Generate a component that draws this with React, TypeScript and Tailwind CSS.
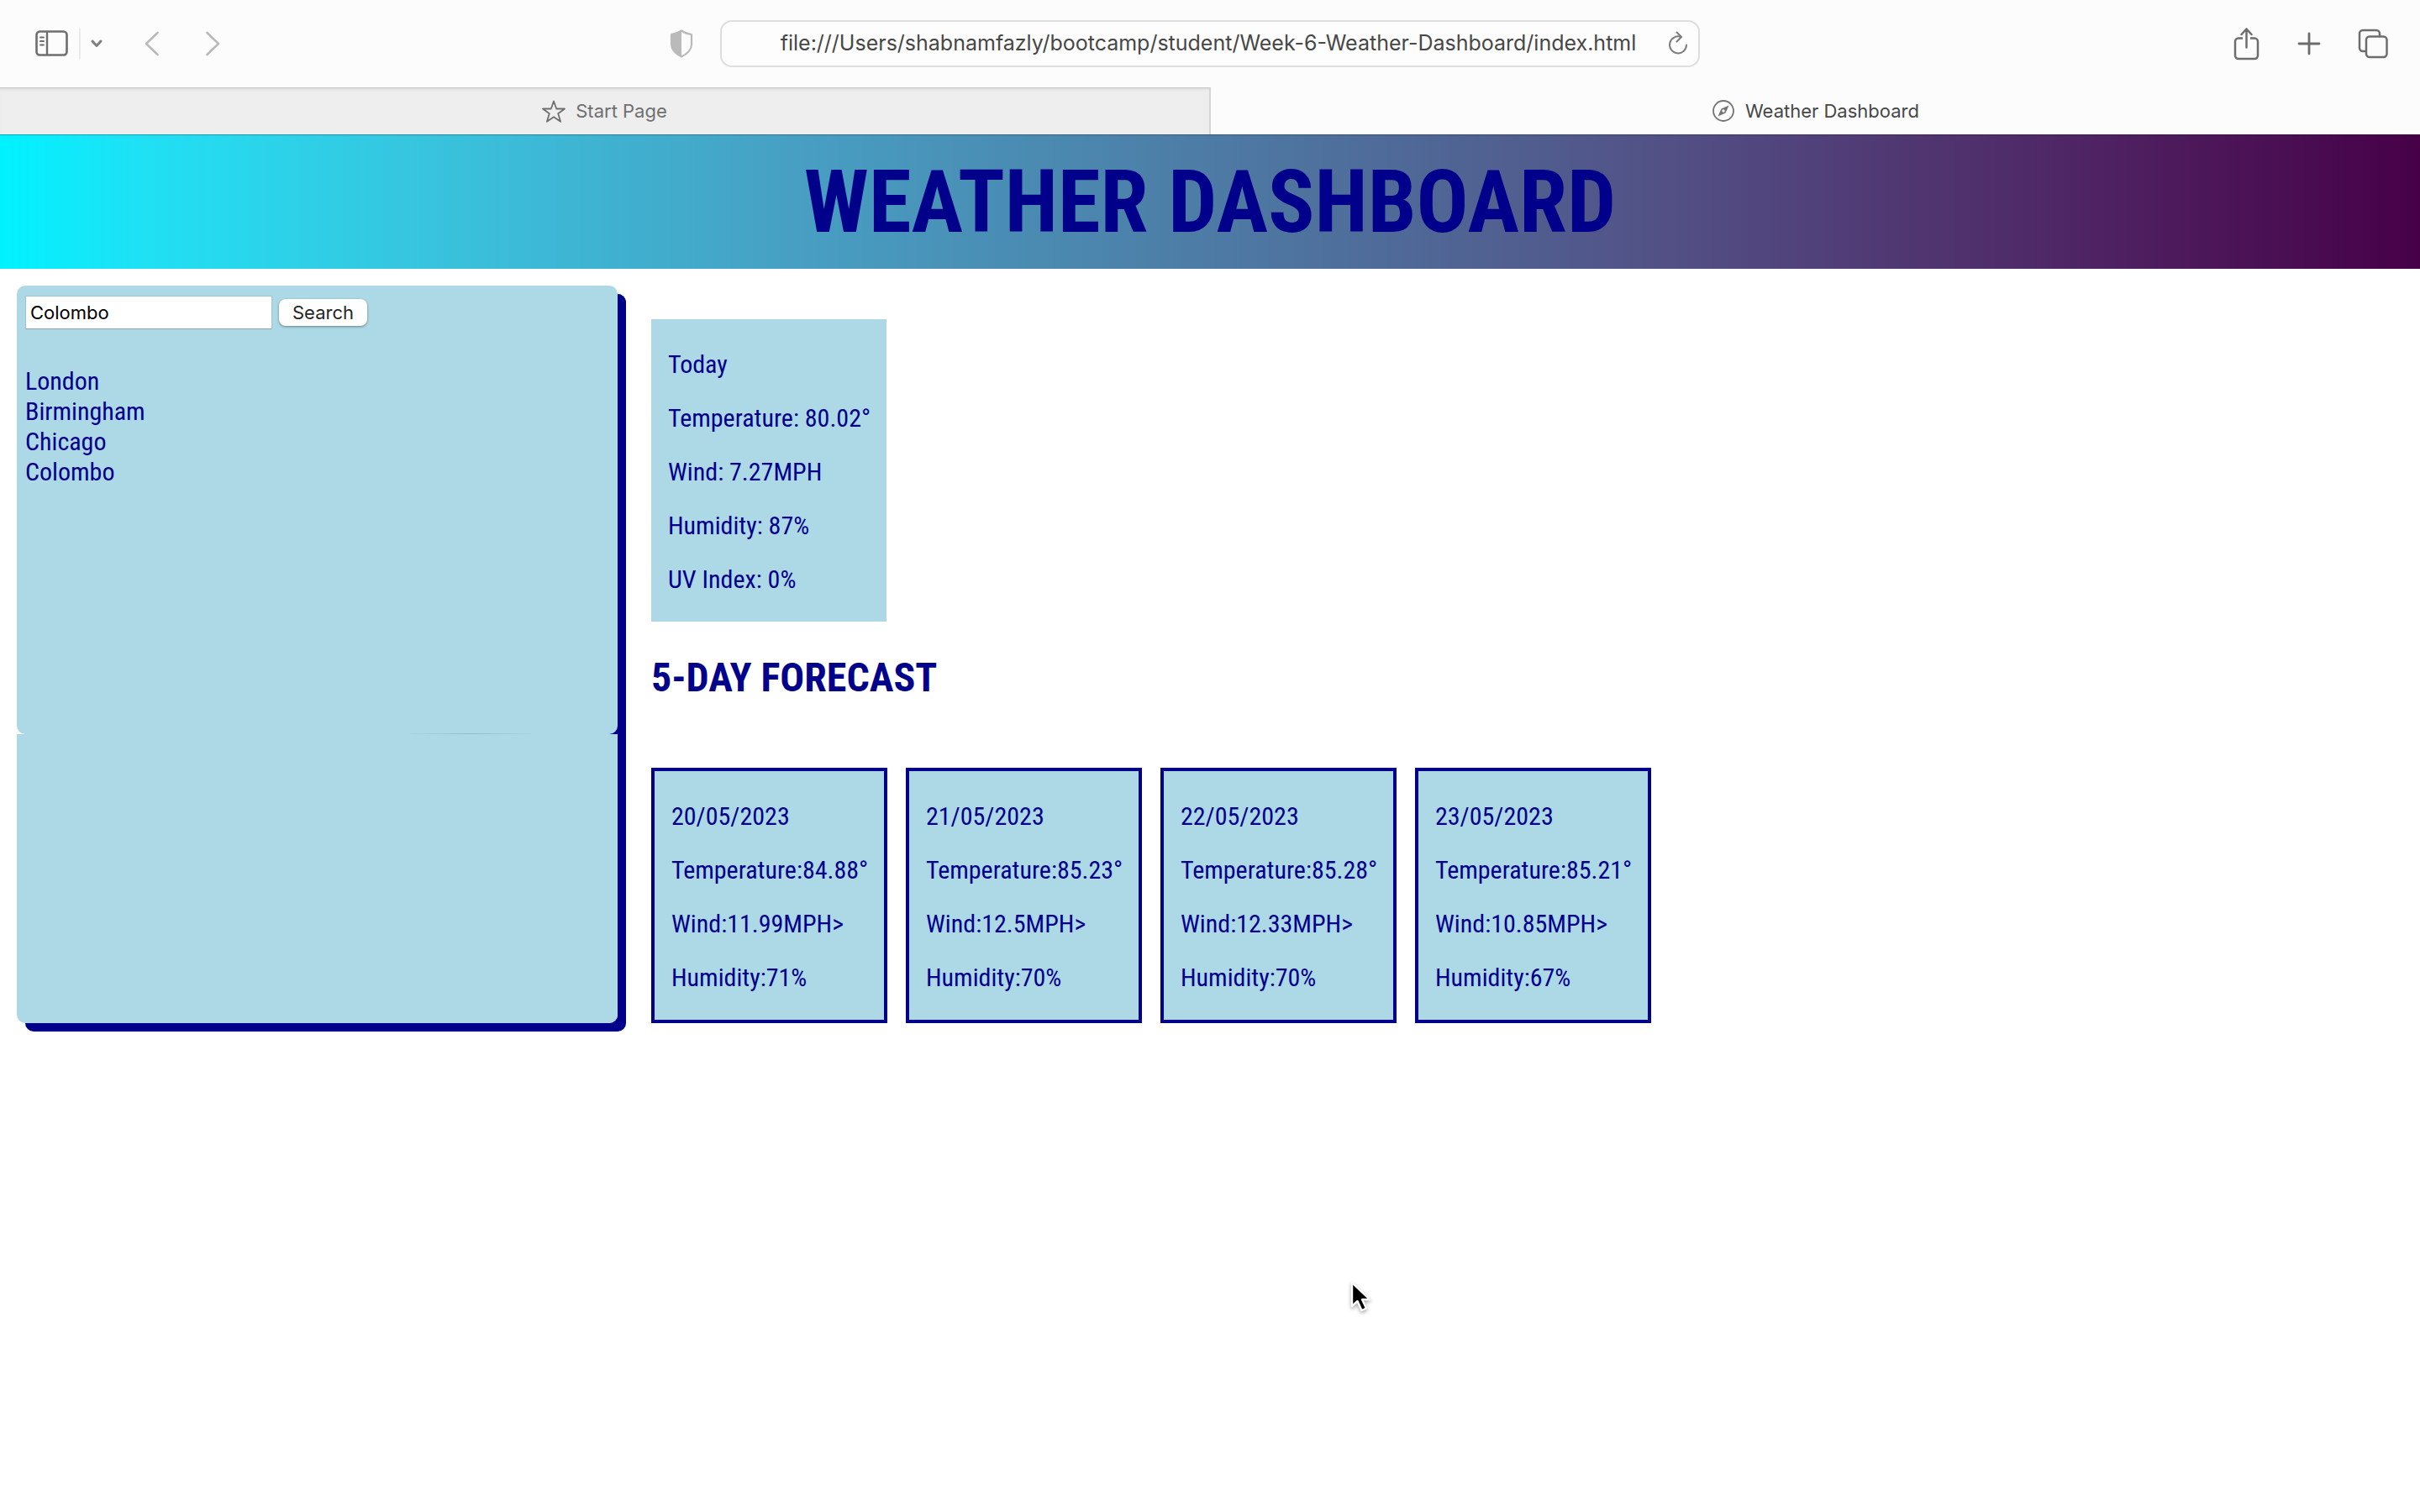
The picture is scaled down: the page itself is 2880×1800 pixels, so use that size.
import type { ReactNode } from "react";

const cities = ["London", "Birmingham", "Chicago", "Colombo"];

const today = [
  "Today",
  "Temperature: 80.02°",
  "Wind: 7.27MPH",
  "Humidity: 87%",
  "UV Index: 0%",
];

const forecast = [
  { date: "20/05/2023", temperature: "84.88", wind: "11.99", humidity: 71 },
  { date: "21/05/2023", temperature: "85.23", wind: "12.5", humidity: 70 },
  { date: "22/05/2023", temperature: "85.28", wind: "12.33", humidity: 70 },
  { date: "23/05/2023", temperature: "85.21", wind: "10.85", humidity: 67 },
];

function IconButton({ label, children }: { label: string; children: ReactNode }) {
  return (
    <button type="button" aria-label={label} className="flex items-center justify-center">
      {children}
    </button>
  );
}

function SidebarIcon() {
  return (
    <svg width="40" height="32" viewBox="0 0 40 32" fill="none" stroke="#6d6d6d" strokeLinecap="round">
      <rect x="1.5" y="1.5" width="36" height="28" rx="4" strokeWidth="2.6" />
      <path d="M14 2v27" strokeWidth="2.4" strokeLinecap="butt" />
      <path d="M6 8.5h4M6 13h4M6 17.500h4" strokeWidth="1.8" />
    </svg>
  );
}

function ShieldIcon() {
  return (
    <svg width="28" height="34" viewBox="0 0 28 34" fill="none">
      <path d="M14 1.500C17.500 4 22 5.500 26 6v12c0 6-5 11-12 14.500C7 29 2 24 2 18V6c4-.5 8.500-2 12-4.500z" stroke="#bababa" strokeWidth="2.200" strokeLinejoin="round" />
      <path d="M14 1.500v31C7 29 2 24 2 18V6c4-.5 8.500-2 12-4.500z" fill="#bababa" />
    </svg>
  );
}

function ReloadIcon() {
  return (
    <svg width="24" height="30" viewBox="0 0 24 30" fill="none" stroke="#7d7d7d" strokeWidth="2" strokeLinecap="round" strokeLinejoin="round">
      <path d="M15.500 7A10 10 0 1 0 22 16.500" />
      <path d="M10.500 1.500L16 7l-5.500 5.500" />
    </svg>
  );
}

function ShareIcon() {
  return (
    <svg width="32" height="40" viewBox="0 0 32 40" fill="none" stroke="#6d6d6d" strokeWidth="2.500" strokeLinecap="round" strokeLinejoin="round">
      <path d="M11 13.500H6a4 4 0 0 0-4 4V34a4 4 0 0 0 4 4h19a4 4 0 0 0 4-4V17.500a4 4 0 0 0-4-4h-5" strokeLinecap="butt" />
      <path d="M15.500 24.500V2.500M9.500 9l6-6.500 6 6.500" />
    </svg>
  );
}

function TabsIcon() {
  return (
    <svg width="36" height="36" viewBox="0 0 36 36" fill="none" stroke="#6d6d6d" strokeWidth="2.500">
      <path d="M26 9V6a4 4 0 0 0-4-4H6a4 4 0 0 0-4 4v17a4 4 0 0 0 4 4h4" />
      <rect x="10" y="9.500" width="24.500" height="24.500" rx="4" />
    </svg>
  );
}

function Browser() {
  return (
    <div className="bg-[#fcfcfc] font-['Inter',sans-serif]">
      <div className="grid h-[104px] grid-cols-[1fr_40.5%_1fr] items-center">
        <div className="flex items-center justify-between pr-8 pl-[42px]">
          <div className="flex items-center">
            <IconButton label="Show sidebar"><SidebarIcon /></IconButton>
            <div className="mr-3 ml-3 h-9 w-0.5 bg-[#ebebeb]" />
            <IconButton label="Sidebar options">
              <svg width="14" height="10" viewBox="0 0 14 10" fill="none" stroke="#7f7f7f" strokeWidth="3" strokeLinecap="round" strokeLinejoin="round">
                <path d="M2 2l5 5.500L12 2" />
              </svg>
            </IconButton>
            <div className="flex gap-14 pl-[50px]">
              <IconButton label="Back">
                <svg width="17" height="30" viewBox="0 0 17 30" fill="none" stroke="#bababa" strokeWidth="2.600" strokeLinecap="round" strokeLinejoin="round">
                  <path d="M15.500 2L2 15l13.500 13" />
                </svg>
              </IconButton>
              <IconButton label="Forward">
                <svg width="17" height="30" viewBox="0 0 17 30" fill="none" stroke="#bababa" strokeWidth="2.600" strokeLinecap="round" strokeLinejoin="round">
                  <path d="M1.500 2L15 15 1.500 28" />
                </svg>
              </IconButton>
            </div>
          </div>
          <IconButton label="Privacy report"><ShieldIcon /></IconButton>
        </div>
        <div className="flex h-14 items-center rounded-[14px] border-2 border-[#dedede] bg-[#fdfdfd] pr-3">
          <input
            aria-label="Address"
            className="min-w-0 flex-1 bg-transparent pl-8 text-center text-[25px] text-[#474747] outline-none"
            defaultValue="file:///Users/shabnamfazly/bootcamp/student/Week-6-Weather-Dashboard/index.html"
          />
          <IconButton label="Reload"><ReloadIcon /></IconButton>
        </div>
        <div className="flex items-center justify-end gap-11 pr-[38px]">
          <IconButton label="Share"><ShareIcon /></IconButton>
          <IconButton label="New tab">
            <svg width="28" height="28" viewBox="0 0 28 28" fill="none" stroke="#6d6d6d" strokeWidth="2.800" strokeLinecap="round">
              <path d="M14 2v24M2 14h24" />
            </svg>
          </IconButton>
          <IconButton label="Show tabs"><TabsIcon /></IconButton>
        </div>
      </div>
      <div className="flex h-14 text-[22px]">
        <button type="button" className="flex flex-1 items-center justify-center gap-3 border-t border-r-2 border-t-[#c6c6c6] border-r-[#d6d6d6] bg-[#eeeeee] text-[#6f6f6f] shadow-[inset_0_3px_3px_-1px_#dedede]">
          <svg width="28" height="28" viewBox="0 0 28 28" fill="none" stroke="#6f6f6f" strokeWidth="1.800" strokeLinejoin="round">
            <path d="M14 1.500l3.200 9H27l-7.800 5.800 2.900 9.500L14 20.200 5.900 25.800l2.900-9.500L1 10.500h9.800z" />
          </svg>
          Start Page
        </button>
        <button type="button" className="flex flex-1 items-center justify-center gap-3 text-[#474747]">
          <svg width="28" height="28" viewBox="0 0 28 28" fill="none" stroke="#747474" strokeWidth="1.800">
            <circle cx="14" cy="14" r="12" />
            <path d="M20.500 7.500l-4 9-9 4 4-9z" fill="#747474" stroke="none" />
            <circle cx="14" cy="14" r="1.700" fill="#fcfcfc" stroke="none" />
          </svg>
          Weather Dashboard
        </button>
      </div>
    </div>
  );
}

function Card({ lines, bordered = false }: { lines: string[]; bordered?: boolean }) {
  return (
    <article
      className={
        bordered
          ? "flex flex-col gap-7 border-4 border-[#00008b] bg-[#add8e6] px-5 pt-9 pb-8"
          : "flex w-[280px] flex-col gap-7 bg-[#add8e6] px-5 pt-9 pb-8"
      }
    >
      {lines.map((line) => (
        <p key={line} className="whitespace-nowrap">{line}</p>
      ))}
    </article>
  );
}

export default function App() {
  return (
    <div className="relative min-h-screen bg-white">
      <Browser />
      <div className="font-['Roboto_Condensed','Liberation_Sans',sans-serif] text-[30px] leading-9 text-[#00008b]">
        <header className="border-t border-black/30 bg-[linear-gradient(to_right,#00f2ff_0%,#20e0f4_6%,#37c5df_17%,#479fc3_33%,#4d7ba5_50%,#525085_69%,#4e1f60_88%,#470047_100%)] py-5 text-center">
          <h1 className="text-[103px] leading-[119px] font-bold">WEATHER DASHBOARD</h1>
        </header>
        <main className="flex py-5 pl-5">
          <aside className="flex w-1/4 flex-col rounded-[10px] shadow-[10px_10px_#00008b]">
            <section className="flex h-[534px] flex-col rounded-[10px] bg-[#add8e6] pt-3 shadow-[10px_10px_#00008b]">
              <form className="flex items-center gap-2 px-2.5 font-['Inter',sans-serif] text-[22px]" onSubmit={(event) => event.preventDefault()}>
                <input
                  aria-label="City"
                  defaultValue="Colombo"
                  className="h-10 w-[294px] border border-[#9fc5d3] border-b-[#8fa5ad] bg-white px-[5px] text-black outline-none"
                />
                <button type="submit" className="h-8 rounded-lg bg-white px-4 leading-8 text-[#262626] shadow-[0_1px_3px_#00000066]">
                  Search
                </button>
              </form>
              <ul className="px-2.5 pt-11">
                {cities.map((city) => (
                  <li key={city}>{city}</li>
                ))}
              </ul>
              <div className="mt-auto ml-[460px] h-px w-40 bg-[linear-gradient(to_right,transparent,#93b8d8,transparent)]" />
            </section>
            <section className="relative flex-1 rounded-b-[10px] bg-[#add8e6]" />
          </aside>
          <section className="flex-1 pt-10 pl-10">
            <Card lines={today} />
            <h2 className="mt-10 mb-20 text-[48px] leading-[54px] font-bold">5-DAY FORECAST</h2>
            <div className="grid grid-cols-[repeat(4,281px)] gap-[22px]">
              {forecast.map((day) => (
                <Card
                  key={day.date}
                  bordered
                  lines={[
                    day.date,
                    `Temperature:${day.temperature}°`,
                    `Wind:${day.wind}MPH>`,
                    `Humidity:${day.humidity}%`,
                  ]}
                />
              ))}
            </div>
          </section>
        </main>
      </div>
      <svg className="absolute top-[1524px] left-[1606px] drop-shadow-[0_2px_2px_#00000059]" width="28" height="40" viewBox="0 0 28 40">
        <path d="M3 3v28l6.500-6 5 11 5.500-2.500-5-10.500h9z" fill="#000" stroke="#fff" strokeWidth="2.400" strokeLinejoin="round" />
      </svg>
    </div>
  );
}
